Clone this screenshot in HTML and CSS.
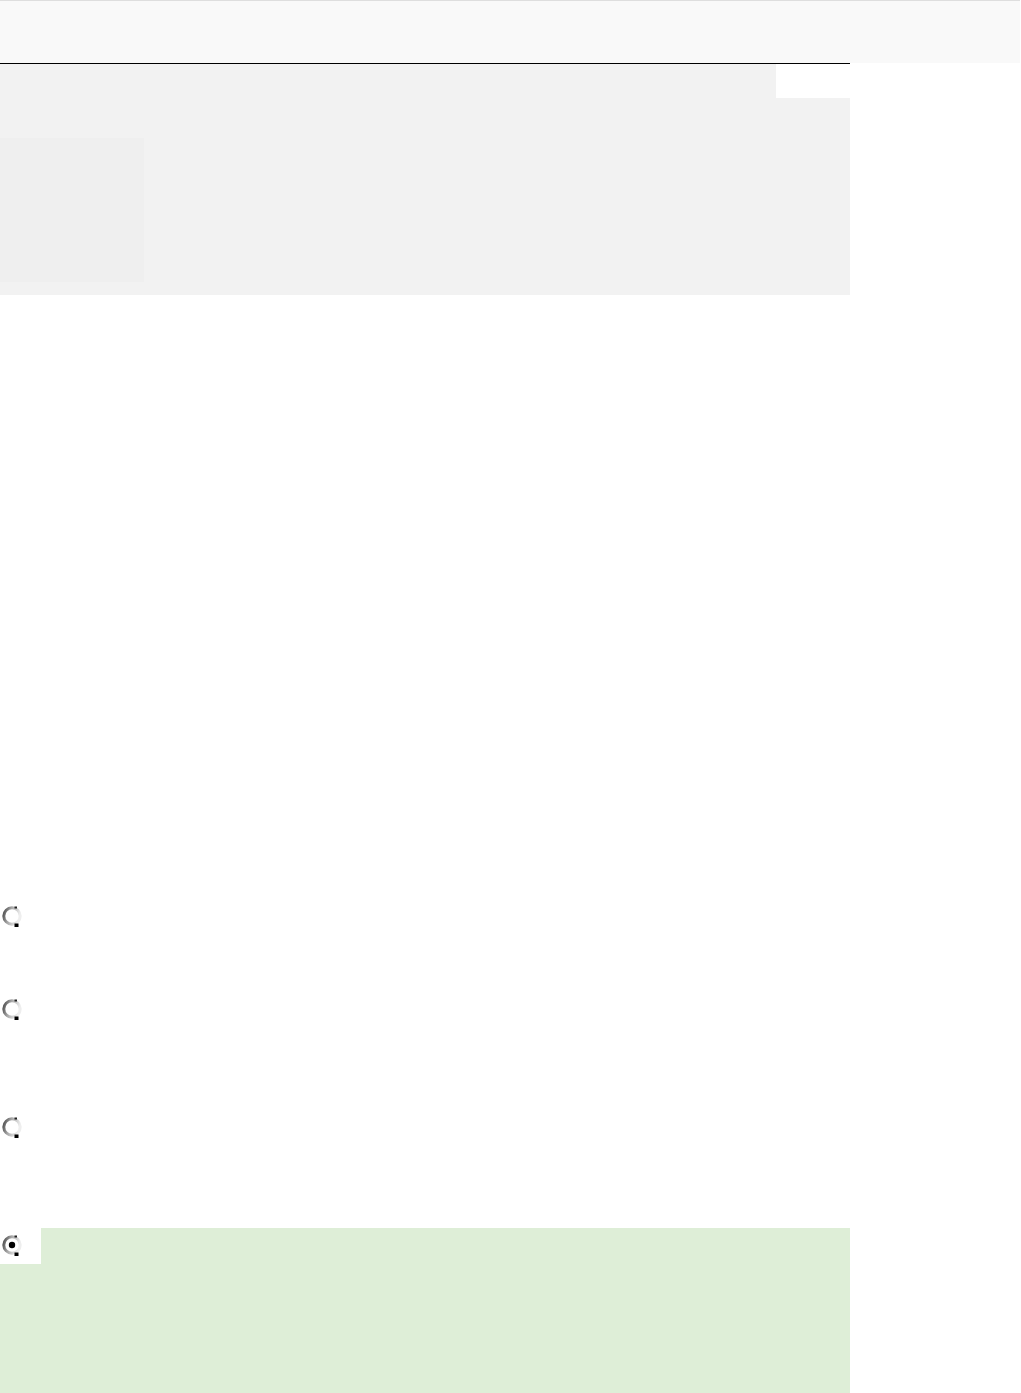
FILE: index.html
```html
<!DOCTYPE html>
<html lang="en">
<head>
<meta charset="utf-8">
<title>Page</title>
<link rel="stylesheet" href="styles.css">
</head>
<body>
<header class="topbar"></header>
<main class="main">
  <section class="panel">
    <div class="panel-top">
      <div class="panel-fill"></div>
      <div class="panel-notch"></div>
    </div>
    <div class="panel-body">
      <div class="thumb"></div>
    </div>
  </section>

  <div class="options">
    <label class="option option-1">
      <svg class="radio" width="22" height="22" viewBox="0 0 22 22" aria-hidden="true">
        <defs>
          <linearGradient id="rg1" x1="0" y1="0" x2="1" y2="0.3">
            <stop offset="0" stop-color="#4a4a4a"/>
            <stop offset="0.45" stop-color="#a8a8a8"/>
            <stop offset="1" stop-color="#eeeeee"/>
          </linearGradient>
        </defs>
        <circle cx="11" cy="11" r="8.2" fill="#fff" stroke="url(#rg1)" stroke-width="3"/>
        <rect x="13.5" y="1.5" width="2.5" height="2" fill="#222"/>
        <rect x="13.5" y="18.5" width="4" height="3.5" fill="#000"/>
      </svg>
    </label>
    <label class="option option-2">
      <svg class="radio" width="22" height="22" viewBox="0 0 22 22" aria-hidden="true">
        <circle cx="11" cy="11" r="8.2" fill="#fff" stroke="url(#rg1)" stroke-width="3"/>
        <rect x="13.5" y="1.5" width="2.5" height="2" fill="#222"/>
        <rect x="13.5" y="18.5" width="4" height="3.5" fill="#000"/>
      </svg>
    </label>
    <label class="option option-3">
      <svg class="radio" width="22" height="22" viewBox="0 0 22 22" aria-hidden="true">
        <circle cx="11" cy="11" r="8.2" fill="#fff" stroke="url(#rg1)" stroke-width="3"/>
        <rect x="13.5" y="1.5" width="2.5" height="2" fill="#222"/>
        <rect x="13.5" y="18.5" width="4" height="3.5" fill="#000"/>
      </svg>
    </label>
    <div class="option-selected">
      <div class="selected-top">
        <div class="selected-notch">
          <svg class="radio" width="22" height="22" viewBox="0 0 22 22" aria-hidden="true">
            <circle cx="11" cy="11" r="8.2" fill="#fff" stroke="url(#rg1)" stroke-width="3"/>
            <circle cx="11" cy="11" r="3.2" fill="#000"/>
            <rect x="13.5" y="1.5" width="2.5" height="2" fill="#222"/>
            <rect x="13.5" y="18.5" width="4" height="3.5" fill="#000"/>
          </svg>
        </div>
        <div class="selected-fill"></div>
      </div>
    </div>
  </div>
</main>
</body>
</html>
```

FILE: styles.css
```css
html, body {
  margin: 0;
  padding: 0;
  background: #ffffff;
  font-family: "Liberation Sans", Arial, sans-serif;
  overflow: hidden;
}

.topbar {
  display: block;
  width: 1020px;
  height: 62px;
  background: #f9f9f9;
  border-top: 1px solid #dedede;
}

.main {
  width: 850px;
  border-top: 1px solid #000000;
}

.panel {
  background: #f2f2f2;
}

.panel-top {
  display: flex;
  height: 34px;
}

.panel-fill {
  flex: 1;
  background: #f2f2f2;
}

.panel-notch {
  width: 74px;
  background: #ffffff;
}

.panel-body {
  padding: 40px 0 13px 0;
}

.thumb {
  width: 144px;
  height: 144px;
  background: #efefef;
}

.options {
  margin-top: 600px;
}

.option {
  display: block;
  padding: 10px 0 0 1px;
}

.option-1 { height: 83px; }
.option-2 { height: 108px; }
.option-3 { height: 112px; }

.radio {
  display: block;
}

.option-selected {
  height: 165px;
  background: #deeed7;
}

.selected-top {
  display: flex;
  height: 36px;
}

.selected-notch {
  width: 40px;
  background: #ffffff;
  padding: 6px 0 0 1px;
}

.selected-fill {
  flex: 1;
}
```
